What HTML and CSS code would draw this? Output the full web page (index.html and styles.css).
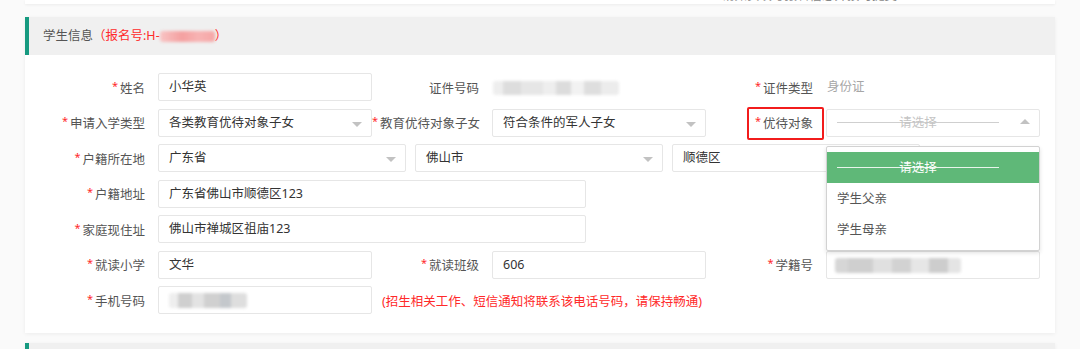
FILE: index.html
```html
<!DOCTYPE html>
<html lang="zh-CN">
<head>
    <meta charset="UTF-8">
    <meta name="viewport" content="width=device-width, initial-scale=1.0">
    <title>学生信息</title>
    <link rel="stylesheet" href="styles.css">
</head>
<body>
    <div class="prev-card">
        <div class="prev-text">请如实填写报名信息并按时提交</div>
    </div>

    <div class="card">
        <div class="card-header">
            学生信息<span class="reg-no">（报名号:H-<span class="blur blur-pink"></span>）</span>
        </div>

        <div class="card-body">
            <div class="form">
                <!-- row 1 -->
                <div class="field">
                    <label class="label"><i class="req">*</i>姓名</label>
                    <div class="control"><div class="input">小华英</div></div>
                </div>
                <div class="field">
                    <label class="label">证件号码</label>
                    <div class="control"><div class="text-value"><span class="blur blur-id"></span></div></div>
                </div>
                <div class="field">
                    <label class="label"><i class="req">*</i>证件类型</label>
                    <div class="control"><div class="text-value muted">身份证</div></div>
                </div>

                <!-- row 2 -->
                <div class="field">
                    <label class="label"><i class="req">*</i>申请入学类型</label>
                    <div class="control"><div class="input select">各类教育优待对象子女</div></div>
                </div>
                <div class="field">
                    <label class="label"><i class="req">*</i>教育优待对象子女</label>
                    <div class="control"><div class="input select">符合条件的军人子女</div></div>
                </div>
                <div class="field">
                    <label class="label"><span class="marked"><i class="req">*</i>优待对象</span></label>
                    <div class="control">
                        <div class="input select open">
                            <span class="placeholder">请选择</span>
                        </div>
                        <ul class="dropdown">
                            <li class="option selected"><span class="placeholder">请选择</span></li>
                            <li class="option">学生父亲</li>
                            <li class="option">学生母亲</li>
                        </ul>
                    </div>
                </div>

                <!-- row 3 -->
                <div class="field full">
                    <label class="label"><i class="req">*</i>户籍所在地</label>
                    <div class="control triple">
                        <div class="input select">广东省</div>
                        <div class="input select">佛山市</div>
                        <div class="input select">顺德区</div>
                    </div>
                </div>

                <!-- row 4 / 5 -->
                <div class="field full">
                    <label class="label"><i class="req">*</i>户籍地址</label>
                    <div class="control wide"><div class="input">广东省佛山市顺德区123</div></div>
                </div>
                <div class="field full">
                    <label class="label"><i class="req">*</i>家庭现住址</label>
                    <div class="control wide"><div class="input">佛山市禅城区祖庙123</div></div>
                </div>

                <!-- row 6 -->
                <div class="field">
                    <label class="label"><i class="req">*</i>就读小学</label>
                    <div class="control"><div class="input">文华</div></div>
                </div>
                <div class="field">
                    <label class="label"><i class="req">*</i>就读班级</label>
                    <div class="control"><div class="input">606</div></div>
                </div>
                <div class="field">
                    <label class="label"><i class="req">*</i>学籍号</label>
                    <div class="control"><div class="input"><span class="blur blur-code"></span></div></div>
                </div>

                <!-- row 7 -->
                <div class="field full">
                    <label class="label"><i class="req">*</i>手机号码</label>
                    <div class="control"><div class="input"><span class="blur blur-phone"></span></div></div>
                    <span class="note">(招生相关工作、短信通知将联系该电话号码，请保持畅通)</span>
                </div>
            </div>
        </div>
    </div>

    <div class="card next-card">
        <div class="card-header"></div>
    </div>
</body>
</html>
```

FILE: styles.css
```css
body {
    margin: 0;
    padding: 0 25px;
    background-color: #fafafa;
    color: #555;
    font-family: "Noto Sans", "Noto Sans CJK SC", sans-serif;
    font-size: 12.5px;
    overflow: hidden;
}

.prev-card {
    height: 4px;
    background-color: #fff;
    box-shadow: 0 1px 3px rgba(0, 0, 0, 0.06);
    overflow: hidden;
}

.prev-text {
    margin-top: -11px;
    margin-left: 697px;
    line-height: 14px;
    color: #888;
}

.card {
    margin-top: 13px;
    background-color: #fff;
    box-shadow: 0 1px 4px rgba(0, 0, 0, 0.06);
}

.card-header {
    height: 38px;
    line-height: 38px;
    padding-left: 14px;
    background-color: #f0f0f0;
    border-left: 4px solid #169a80;
    color: #555;
}

.reg-no {
    color: #ff2a2a;
}

.card-body {
    padding: 18px 0 19px 13px;
}

.form {
    display: grid;
    grid-template-columns: repeat(3, 334px);
    row-gap: 7.5px;
}

.field {
    display: flex;
    align-items: center;
}

.full {
    grid-column: 1 / -1;
}

.label {
    box-sizing: border-box;
    width: 120px;
    padding-right: 13px;
    text-align: right;
    white-space: nowrap;
    color: #555;
}

.req {
    font-style: normal;
    color: #ff2a2a;
    font-size: 11px;
    position: relative;
    top: -3px;
    margin-right: 2px;
}

.marked {
    position: relative;
}

.marked::after {
    content: "";
    position: absolute;
    top: -8px;
    bottom: -8px;
    left: -8px;
    right: -11px;
    border: 2px solid #f21c1c;
    border-radius: 2px;
}

.control {
    position: relative;
    width: 214px;
}

.control.wide {
    width: 428px;
}

.control.triple {
    width: auto;
    display: flex;
    gap: 9px;
}

.control.triple .input {
    width: 248px;
}

.input {
    box-sizing: border-box;
    height: 28px;
    line-height: 26px;
    padding-left: 10px;
    border: 1px solid #e6e6e6;
    border-radius: 2px;
    background-color: #fff;
    color: #333;
    position: relative;
}

.select::after {
    content: "";
    position: absolute;
    right: 9px;
    top: 12px;
    border-top: 5px solid #c2c2c2;
    border-left: 5px solid transparent;
    border-right: 5px solid transparent;
}

.select.open::after {
    top: 9px;
    border-top: none;
    border-bottom: 5px solid #c2c2c2;
}

.text-value {
    height: 28px;
    line-height: 28px;
    padding-left: 1px;
    color: #333;
}

.muted {
    color: #a6a6a6;
}

.placeholder {
    display: block;
    width: 162px;
    text-align: center;
    color: #c4c4c4;
    background: linear-gradient(#cfcfcf, #cfcfcf) center / 100% 1px no-repeat;
}

.dropdown {
    position: absolute;
    top: 37px;
    left: 0;
    right: 0;
    z-index: 5;
    margin: 0;
    padding: 5px 0;
    list-style: none;
    background-color: #fff;
    border: 1px solid #d2d2d2;
    border-radius: 2px;
    box-shadow: 0 2px 4px rgba(0, 0, 0, 0.12);
}

.option {
    height: 31px;
    line-height: 31px;
    padding-left: 10px;
    color: #555;
}

.option.selected {
    background-color: #5fb878;
}

.option.selected .placeholder {
    color: #fff;
    background-image: linear-gradient(#e8f5eb, #e8f5eb);
}

.note {
    margin-left: 10px;
    color: #ff2a2a;
}

.blur {
    display: inline-block;
    vertical-align: middle;
    filter: blur(1.5px);
    border-radius: 3px;
}

.blur-pink {
    width: 55px;
    height: 11px;
    background: linear-gradient(90deg, #f8c4c4, #f4a0a0 40%, #f7b3b3 70%, #f5a6a6);
}

.blur-id {
    width: 126px;
    height: 14px;
    background: linear-gradient(90deg, #eee 0 8%, #ddd 8% 22%, #e6e6e6 22% 40%, #eee 40% 50%, #dcdcdc 50% 62%, #f2f2f2 62% 72%, #dedede 72% 86%, #ececec 86%);
}

.blur-code {
    width: 126px;
    height: 15px;
    margin-left: -2px;
    background: linear-gradient(90deg, #d6d6d6 0 10%, #cfcfcf 10% 30%, #e0e0e0 30% 45%, #d2d2d2 45% 60%, #e6e6e6 60% 75%, #cdcdcd 75% 90%, #e4e4e4 90%);
}

.blur-phone {
    width: 78px;
    height: 15px;
    background: linear-gradient(90deg, #eee 0 12%, #cfcfcf 12% 30%, #e3e3e3 30% 45%, #d0d0d0 45% 65%, #c4c8cc 65% 80%, #dedede 80%);
}

.next-card {
    margin-top: 10px;
}
```
